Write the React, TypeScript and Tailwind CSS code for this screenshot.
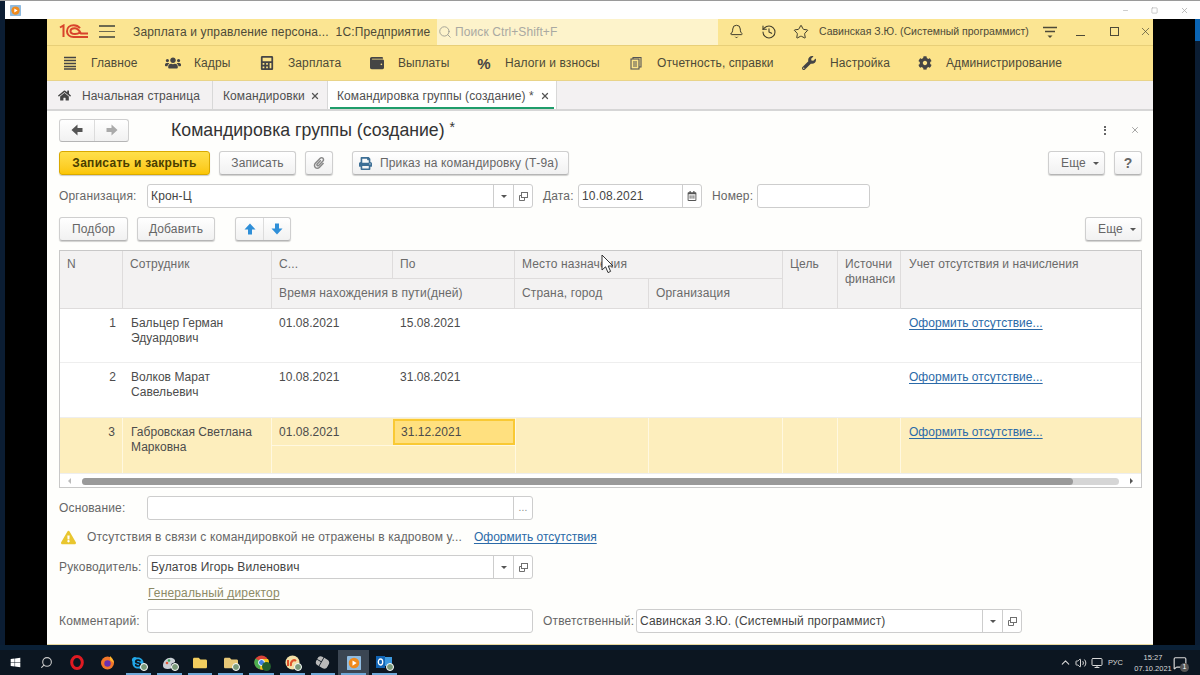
import React from "react";
import { FaHome, FaUsers, FaCalculator, FaWallet, FaWrench, FaCog, FaPrint, FaPaperclip, FaRegCalendarAlt, FaExclamationTriangle, FaWindows, FaSkype, FaFolder, FaMouse } from "react-icons/fa";
import { Bell, History, Star, Search, Minus, Square, X, ChevronUp, Volume2, Monitor, MessageSquare } from "lucide-react";

const COLS = "grid grid-cols-[63px_149px_121px_122px_134px_134px_55px_63px_1fr]";

function Btn({ className = "", children }: { className?: string; children: React.ReactNode }) {
  return (
    <div className={"flex h-[24px] items-center justify-center rounded-[3px] border border-[#cfcfcf] border-b-[#b5b5b5] bg-linear-to-b from-white to-[#f1f1f1] text-[12px] text-[#666] tracking-[0.15px] shadow-[0_1px_1px_rgba(0,0,0,0.18)] " + className}>
      {children}
    </div>
  );
}

function Arrow({ dir, color }: { dir: "up" | "down" | "left" | "right"; color: string }) {
  const r = { up: "rotate-0", down: "rotate-180", left: "-rotate-90", right: "rotate-90" }[dir];
  return (
    <svg className={r} width="12" height="12" viewBox="0 0 12 12" fill={color}>
      <path d="M6 0.5 L11.5 6.5 H8 V11.5 H4 V6.5 H0.5 Z" />
    </svg>
  );
}

function Open() {
  return (
    <svg width="11" height="11" viewBox="0 0 11 11" fill="none" stroke="#6f6f6f" strokeWidth="1">
      <rect x="3.5" y="1.5" width="6" height="5" />
      <path d="M3.5 4.5h-2v5h5v-3" />
    </svg>
  );
}

function Caret() {
  return <span className="h-0 w-0 border-x-[3px] border-t-[3px] border-x-transparent border-t-[#555]" />;
}

function Field({ className = "", value, select, open, dots, cal }: { className?: string; value?: string; select?: boolean; open?: boolean; dots?: boolean; cal?: boolean }) {
  return (
    <div className={"flex h-[24px] items-stretch rounded-[3px] border border-[#cdcdcd] bg-white text-[12px] text-[#444] tracking-[0.15px] " + className}>
      <div className="flex flex-1 items-center pl-[3px] whitespace-nowrap">{value}</div>
      {select && <div className="flex w-[20px] items-center justify-center border-l border-[#cdcdcd]"><Caret /></div>}
      {open && <div className="flex w-[19px] items-center justify-center border-l border-[#cdcdcd]"><Open /></div>}
      {dots && <div className="flex w-[19px] items-center justify-center border-l border-[#cdcdcd] pb-[1px] text-[10px] text-[#888]">...</div>}
      {cal && <div className="flex w-[19px] items-center justify-center border-l border-[#cdcdcd]"><FaRegCalendarAlt className="text-[10px] text-[#555]" /></div>}
    </div>
  );
}

function Label({ className = "", children }: { className?: string; children: React.ReactNode }) {
  return <div className={"text-[12px] text-[#666] tracking-[0.15px] whitespace-nowrap " + className}>{children}</div>;
}

function Bars() {
  return (
    <svg width="14" height="14" viewBox="0 0 14 14" stroke="#444" strokeWidth="1.6"><path d="M1 1.5h12M1 4.5h12M1 7.5h12M1 10.5h12M1 13h12" /></svg>
  );
}

function Docs() {
  return (
    <svg width="13" height="14" viewBox="0 0 13 14" fill="none" stroke="#555" strokeWidth="1.1">
      <rect x="1" y="3" width="8" height="10" />
      <path d="M3 3V1.5h8V11H9M3 6h4M3 8h4M3 10h4" />
    </svg>
  );
}

const menu = [
  { w: "w-[103px]", icon: <Bars />, t: "Главное" },
  { w: "w-[94px]", icon: <FaUsers className="text-[16px]" />, t: "Кадры" },
  { w: "w-[110px]", icon: <FaCalculator className="text-[14px]" />, t: "Зарплата" },
  { w: "w-[107px]", icon: <FaWallet className="text-[14px]" />, t: "Выплаты" },
  { w: "w-[152px]", icon: <span className="text-[15px] font-bold leading-none">%</span>, t: "Налоги и взносы" },
  { w: "w-[173px]", icon: <Docs />, t: "Отчетность, справки" },
  { w: "w-[116px]", icon: <FaWrench className="text-[14px]" />, t: "Настройка" },
  { w: "w-[150px]", icon: <FaCog className="text-[14px]" />, t: "Администрирование" },
];

function Logo1C() {
  return (
    <svg width="30" height="15" viewBox="0 0 30 15" fill="none" stroke="#d8432b" strokeWidth="2">
      <path d="M1 3.5 L4.5 1.5 V13" />
      <path d="M21 4.2 C19.5 2.2 17 1.2 14.6 1.2 C10.6 1.2 8 3.8 8 7.2 C8 10.6 10.6 13 14.6 13 H29" />
      <path d="M20.5 8.6 C19.6 9.6 17.8 10 16 10 C13.4 10 11.5 9 11.5 7.2 C11.5 5.2 13.4 4.2 15.6 4.2 C17.8 4.2 20 5.6 22 9.6 H29" />
    </svg>
  );
}

function Cursor() {
  return (
    <svg className="absolute left-[601px] top-[254px]" width="15" height="21" viewBox="0 0 15 21">
      <path d="M1 1 V16 L4.6 12.8 L7 18.6 L9.6 17.4 L7.2 12 H12 Z" fill="#fff" stroke="#333" strokeWidth="1" />
    </svg>
  );
}

const rows = [
  { n: "1", a: "Бальцер Герман", b: "Эдуардович", s: "01.08.2021", e: "15.08.2021", h: "h-[54px]" },
  { n: "2", a: "Волков Марат", b: "Савельевич", s: "10.08.2021", e: "31.08.2021", h: "h-[55px]" },
];

function Link({ className = "", children }: { className?: string; children: React.ReactNode }) {
  return <span className={"text-[12px] text-[#2b6aa8] underline underline-offset-2 whitespace-nowrap " + className}>{children}</span>;
}

function Table() {
  const hc = "border-r border-b border-[#dedcdc] pl-[7px] text-[12px] text-[#6a6a6a] tracking-[0.15px]";
  return (
    <div className="mt-[9px] mr-[11px] ml-[12px] h-[238px] border border-[#c8c8c8] bg-white">
      <div className={COLS + " h-[58px] grid-rows-[28px_30px] border-b border-[#d8d8d8] bg-[#f3f2f2] leading-[15px]"}>
        <div className={hc + " row-span-2 pt-[6px]"}>N</div>
        <div className={hc + " row-span-2 pt-[6px]"}>Сотрудник</div>
        <div className={hc + " pt-[6px]"}>С...</div>
        <div className={hc + " pt-[6px]"}>По</div>
        <div className={hc + " col-span-2 pt-[6px]"}>Место назначения</div>
        <div className={hc + " row-span-2 pt-[6px]"}>Цель</div>
        <div className={hc + " row-span-2 overflow-hidden whitespace-nowrap pt-[6px]"}>Источни<br />финанси</div>
        <div className="row-span-2 pl-[8px] pt-[6px] text-[12px] text-[#6a6a6a] tracking-[0.05px] whitespace-nowrap">Учет отсутствия и начисления</div>
        <div className={hc + " col-span-2 pt-[7px]"}>Время нахождения в пути(дней)</div>
        <div className={hc + " pt-[7px]"}>Страна, город</div>
        <div className={hc + " pt-[7px]"}>Организация</div>
      </div>
      {rows.map((r) => (
        <div key={r.n} className={COLS + " border-b border-[#eeeeee] text-[12px] leading-[15px] text-[#4c4c4c] tracking-[0.03px] " + r.h}>
          <div className="pt-[7px] pr-[7px] text-right">{r.n}</div>
          <div className="pl-[8px] pt-[7px]">{r.a}<br />{r.b}</div>
          <div className="pl-[7px] pt-[7px]">{r.s}</div>
          <div className="pl-[7px] pt-[7px]">{r.e}</div>
          <div /><div /><div /><div />
          <div className="pl-[8px] pt-[7px]"><Link className="text-[11.7px]">Оформить отсутствие...</Link></div>
        </div>
      ))}
      <div className={COLS + " h-[55px] grid-rows-[27px_28px] bg-[#fdeebd] text-[12px] leading-[15px] text-[#4c4c4c] tracking-[0.03px]"}>
        <div className="row-span-2 border-r border-[#fff8e0] pt-[7px] pr-[7px] text-right">3</div>
        <div className="row-span-2 border-r border-[#fff8e0] pl-[8px] pt-[7px] whitespace-nowrap">Габровская Светлана<br />Марковна</div>
        <div className="pl-[7px] pt-[7px]">01.08.2021</div>
        <div className="mt-[1px] border-2 border-[#f9c934] bg-[#ffe07f] pl-[6px] pt-[4px]">31.12.2021</div>
        <div className="row-span-2 border-r border-l border-[#fff8e0]" />
        <div className="row-span-2 border-r border-[#fff8e0]" />
        <div className="row-span-2 border-r border-[#fff8e0]" />
        <div className="row-span-2 border-r border-[#fff8e0]" />
        <div className="row-span-2 pl-[8px] pt-[7px]"><Link className="text-[11.7px]">Оформить отсутствие...</Link></div>
        <div className="col-span-2 border-t border-[#fff8e0]" />
      </div>
      <div className="flex h-[15px] items-center border-t border-[#eeeeee] px-[8px]">
        <span className="h-0 w-0 border-y-[3px] border-r-[3px] border-y-transparent border-r-[#bbb]" />
        <div className="mx-[11px] h-[7px] flex-1 rounded-full bg-[#d6d6d6]">
          <div className="h-full w-[95.6%] rounded-full bg-[#9a9a9a]" />
        </div>
        <span className="h-0 w-0 border-y-[3px] border-l-[3px] border-y-transparent border-l-[#555]" />
      </div>
    </div>
  );
}

function TaskIcon({ children, active, run }: { children?: React.ReactNode; active?: boolean; run?: boolean }) {
  return (
    <div className={"relative flex h-full w-[30.75px] items-center justify-center " + (active ? "bg-[#3b4653]" : "")}>
      {children}
      {run && <span className="absolute right-[3px] bottom-0 left-[3px] h-[2px] bg-[#6fa8d8]" />}
    </div>
  );
}

function Badge() {
  return <span className="absolute left-[17px] top-[13px] h-[8px] w-[8px] rounded-full border border-white bg-[#7a9a7a]" />;
}

function Player({ size }: { size: number }) {
  return (
    <svg width={size} height={size} viewBox="0 0 16 16">
      <rect width="16" height="16" rx="1" fill="#8fbbe0" />
      <circle cx="8" cy="8" r="6" fill="#f08a1d" />
      <path d="M6.3 5 L11 8 L6.3 11 Z" fill="#fff" />
    </svg>
  );
}

export default function App() {
  return (
    <div className="relative flex h-[675px] w-[1200px] flex-col overflow-hidden bg-black font-['Liberation_Sans',Arial,sans-serif]">
      <div className="h-px bg-[#9a9a9a]" />
      <div className="flex h-[18px] bg-[#0b1d33]">
        <div className="ml-[5px] flex flex-1 items-center justify-between bg-white pr-[11px] pl-[5px]">
          <Player size={11} />
          <div className="flex items-center gap-[22px] text-[#a8a8a8]">
            <Minus size={7} />
            <Square size={7} />
            <X size={9} />
          </div>
        </div>
      </div>

      <div className="flex h-[626px]">
        <div className="w-[5px] bg-[#0b1d33]" />
        <div className="w-[42px] bg-black" />
        <div className="flex w-[1106px] flex-col border-b border-[#e8d9a0] bg-[#fefefc]">
          {/* top bar */}
          <div className="flex h-[27px] shrink-0 items-center border-b border-[#e8cf78] bg-[#fbe592] pb-[1px]">
            <div className="ml-[12px]"><Logo1C /></div>
            <div className="ml-[10px] flex w-[16px] flex-col gap-[4px]">
              <span className="h-[1.5px] bg-[#6d6a50]" />
              <span className="h-[1.5px] bg-[#6d6a50]" />
              <span className="h-[1.5px] bg-[#6d6a50]" />
            </div>
            <div className="ml-[18px] w-[304px] text-[12px] tracking-[0.15px] text-[#4d4a38] whitespace-nowrap">Зарплата и управление персона...&nbsp; 1С:Предприятие</div>
            <div className="flex h-[26px] w-[281px] items-center bg-[#fdf3cb] pl-[1px] text-[12px] tracking-[0.1px] text-[#a9a9a2]">
              <Search size={14} strokeWidth={1.5} className="mr-[3px] text-[#9a9a90]" />
              Поиск Ctrl+Shift+F
            </div>
            <Bell size={15} strokeWidth={1.6} className="ml-[11px] text-[#3f3c2c]" />
            <History size={16} strokeWidth={1.6} className="ml-[17px] text-[#3f3c2c]" />
            <Star size={16} strokeWidth={1.5} className="ml-[16px] text-[#3f3c2c]" />
            <div className="ml-[10px] w-[224px] text-[10.5px] text-[#4d4a38] whitespace-nowrap">Савинская З.Ю. (Системный программист)</div>
            <svg width="14" height="14" viewBox="0 0 14 14" stroke="#4d4a38" strokeWidth="1.4" fill="none"><path d="M0 2.5h14M2 6.5h10" /><path d="M4.5 10.5h5L7 13Z" fill="#4d4a38" stroke="none" /></svg>
            <div className="ml-[19px] mt-[8px] h-[1.5px] w-[9px] bg-[#4d4a38]" />
            <div className="ml-[25px] h-[9px] w-[9px] border-[1.5px] border-[#4d4a38]" />
            <X size={13} strokeWidth={1.3} className="ml-[20px] text-[#4d4a38]" />
          </div>
          {/* menu */}
          <div className="flex h-[35px] shrink-0 items-center border-b border-[#e9d489] bg-[#fce38a] pl-[15px] text-[12px] text-[#4d4a38] tracking-[0.1px]">
            {menu.map((m) => (
              <div key={m.t} className={"flex items-center gap-[13px] whitespace-nowrap " + m.w}>
                <span className="flex w-[16px] justify-center text-[#454545]">{m.icon}</span>
                {m.t}
              </div>
            ))}
          </div>
          {/* tabs */}
          <div className="flex h-[30px] shrink-0 border-b-2 border-[#d6d6d6] bg-[#f3f1f2] text-[12px] text-[#4f4f4f] tracking-[0.1px] whitespace-nowrap">
            <div className="flex w-[166px] items-center border-r border-[#d8d8d8] pt-[1px] pl-[11px]">
              <FaHome className="mr-[11px] text-[13px] text-[#444]" />Начальная страница
            </div>
            <div className="flex w-[115px] items-center justify-between border-r border-[#d8d8d8] pt-[1px] pr-[7px] pl-[10px]">
              Командировки <X size={10} strokeWidth={3} className="text-[#555]" />
            </div>
            <div className="relative flex w-[229px] items-center justify-between border-r border-[#d8d8d8] bg-white pt-[1px] pr-[6px] pl-[9px]">
              Командировка группы (создание) * <X size={10} strokeWidth={3} className="text-[#555]" />
              <span className="absolute right-[2px] bottom-0 left-[2px] h-[2px] bg-[#1f9d6b]" />
            </div>
          </div>
          {/* title */}
          <div className="flex h-[40px] shrink-0 items-center pr-[13px] pb-[2px] pl-[12px]">
            <div className="flex h-[23px] w-[70px] rounded-[3px] border border-[#cfcfcf] border-b-[#b5b5b5] bg-linear-to-b from-white to-[#f1f1f1]">
              <div className="flex w-[35px] items-center justify-center border-r border-[#dcdcdc]"><Arrow dir="left" color="#555" /></div>
              <div className="flex flex-1 items-center justify-center"><Arrow dir="right" color="#aaa" /></div>
            </div>
            <div className="ml-[42px] flex-1 text-[17.7px] text-[#333]">Командировка группы (создание) <span className="align-top text-[14px]">*</span></div>
            <div className="mr-[24px] flex flex-col gap-[1.5px]">
              <span className="h-[2px] w-[2px] bg-[#666]" /><span className="h-[2px] w-[2px] bg-[#666]" /><span className="h-[2px] w-[2px] bg-[#666]" />
            </div>
            <X size={10} strokeWidth={1.6} className="text-[#777]" />
          </div>
          {/* command bar */}
          <div className="flex shrink-0 items-center pr-[11px] pl-[12px]">
            <div className="flex h-[24px] w-[151px] items-center justify-center rounded-[3px] border border-[#d9a900] bg-linear-to-b from-[#ffe04a] to-[#fbc600] text-[12px] font-bold tracking-[0.3px] text-[#4a3d00] shadow-[0_1px_1px_rgba(0,0,0,0.2)]">Записать и закрыть</div>
            <Btn className="ml-[9px] w-[77px]">Записать</Btn>
            <Btn className="ml-[9px] w-[28px]"><FaPaperclip className="text-[12px] text-[#888]" /></Btn>
            <Btn className="ml-[19px] w-[217px] justify-start pl-[6px]"><FaPrint className="mr-[8px] text-[13px] text-[#3d6f96]" />Приказ на командировку (Т-9а)</Btn>
            <div className="flex-1" />
            <Btn className="w-[57px] justify-start gap-[7px] pl-[12px]">Еще <Caret /></Btn>
            <Btn className="ml-[9px] w-[28px] text-[14px] font-bold text-[#444]">?</Btn>
          </div>
          {/* org */}
          <div className="mt-[9px] flex shrink-0 items-center pl-[12px]">
            <Label className="w-[88px]">Организация:</Label>
            <Field className="w-[386px]" value="Крон-Ц" select open />
            <Label className="ml-[10px] w-[35px]">Дата:</Label>
            <Field className="w-[124px] border-[#b8b8b8]" value="10.08.2021" cal />
            <Label className="ml-[10px] w-[45px]">Номер:</Label>
            <Field className="w-[113px]" />
          </div>
          {/* table bar */}
          <div className="mt-[9px] flex shrink-0 items-center pr-[11px] pl-[12px]">
            <Btn className="w-[69px]">Подбор</Btn>
            <Btn className="ml-[9px] w-[78px]">Добавить</Btn>
            <div className="ml-[20px] flex h-[24px] w-[56px] rounded-[3px] border border-[#cfcfcf] border-b-[#b5b5b5] bg-linear-to-b from-white to-[#f1f1f1] shadow-[0_1px_1px_rgba(0,0,0,0.18)]">
              <div className="flex w-[28px] items-center justify-center border-r border-[#dcdcdc]"><Arrow dir="up" color="#2f8fd8" /></div>
              <div className="flex flex-1 items-center justify-center"><Arrow dir="down" color="#2f8fd8" /></div>
            </div>
            <div className="flex-1" />
            <Btn className="w-[57px] justify-start gap-[7px] pl-[12px]">Еще <Caret /></Btn>
          </div>
          <Table />
          {/* base */}
          <div className="mt-[8px] flex shrink-0 items-center pl-[12px]">
            <Label className="w-[88px]">Основание:</Label>
            <Field className="w-[386px]" dots />
          </div>
          <div className="mt-[8px] flex h-[18px] shrink-0 items-center pl-[14px]">
            <FaExclamationTriangle className="text-[15px] text-[#e9c62f]" />
            <Label className="ml-[11px] text-[#555]">Отсутствия в связи с командировкой не отражены в кадровом у...</Label>
            <Link className="ml-[12px]">Оформить отсутствия</Link>
          </div>
          <div className="mt-[9px] flex shrink-0 items-center pl-[12px]">
            <Label className="w-[88px]">Руководитель:</Label>
            <Field className="w-[386px]" value="Булатов Игорь Виленович" select open />
          </div>
          <div className="mt-[6px] h-[16px] shrink-0 pl-[101px] text-[12px] leading-[16px] tracking-[0.15px] text-[#8d8a66] underline underline-offset-2">Генеральный директор</div>
          <div className="mt-[8px] flex shrink-0 items-center pl-[12px]">
            <Label className="w-[88px]">Комментарий:</Label>
            <Field className="w-[386px]" />
            <Label className="ml-[10px] w-[93px]">Ответственный:</Label>
            <Field className="w-[386px]" value="Савинская З.Ю. (Системный программист)" select open />
          </div>
        </div>
        <div className="w-[42px] bg-black" />
        <div className="flex w-[5px] flex-col bg-[#0b1d33]"><div className="h-[22px] bg-[#0a64b4]" /></div>
      </div>

      <div className="h-[5px] bg-[#0a2036]" />
      <div className="flex h-[25px] items-center bg-[#0c1621] text-[#d8d8d8]">
        <TaskIcon><FaWindows className="text-[11px] text-white" /></TaskIcon>
        <TaskIcon><Search size={13} className="-scale-x-100 text-[#ccc]" /></TaskIcon>
        <TaskIcon>
          <svg width="14" height="15" viewBox="0 0 14 15"><ellipse cx="7" cy="7.5" rx="5.3" ry="6" fill="none" stroke="#e01a22" strokeWidth="3" /></svg>
        </TaskIcon>
        <TaskIcon>
          <svg width="15" height="15" viewBox="0 0 15 15"><circle cx="7.5" cy="8" r="6.5" fill="#f2762a" /><circle cx="7.5" cy="8.5" r="3.2" fill="#6a2fb0" /><path d="M10 1 C12 3 13.5 5 14 8 L10 5Z" fill="#ffb52e" /></svg>
        </TaskIcon>
        <TaskIcon run><FaSkype className="text-[14px] text-[#22a7e8]" /><Badge /></TaskIcon>
        <TaskIcon run>
          <svg width="15" height="14" viewBox="0 0 15 14"><path d="M1 10 C1 4 6 1 10 2 C14 3 14 7 11 7 C9 7 9 10 10 12 C6 14 1 13 1 10Z" fill="#c9ced4" /><circle cx="5" cy="7" r="1.3" fill="#e25b3a" /><circle cx="7" cy="4.5" r="1.3" fill="#3aa55b" /></svg>
          <Badge />
        </TaskIcon>
        <TaskIcon run><FaFolder className="text-[14px] text-[#f2cd5e]" /></TaskIcon>
        <TaskIcon run><FaFolder className="text-[14px] text-[#e7c777]" /><Badge /></TaskIcon>
        <TaskIcon run>
          <svg width="15" height="15" viewBox="0 0 15 15"><circle cx="7.5" cy="7.5" r="7" fill="#db4437" /><path d="M1.5 3.5 A7 7 0 0 0 6 14.3 L9 8Z" fill="#4caf50" /><path d="M7.5 4 H14 A7 7 0 0 1 6 14.3Z" fill="#f5c518" /><circle cx="7.5" cy="7.5" r="3" fill="#3f7fe0" stroke="#fff" /></svg>
          <span className="absolute left-[16px] top-[12px] h-[9px] w-[9px] rounded-full bg-[#245f2e]" />
        </TaskIcon>
        <TaskIcon run>
          <svg width="15" height="15" viewBox="0 0 15 15"><circle cx="7.5" cy="7.5" r="7" fill="#f3dfa6" /><path d="M3 11 V5 M6 11 C5 6 9 4 11 6" stroke="#e0532b" strokeWidth="2" fill="none" /></svg>
          <Badge />
        </TaskIcon>
        <TaskIcon run><FaMouse className="-rotate-60 text-[13px] text-[#b9b9b9]" /></TaskIcon>
        <TaskIcon active run><Player size={14} /></TaskIcon>
        <TaskIcon run>
          <svg width="16" height="15" viewBox="0 0 16 15"><rect x="5" y="2" width="11" height="9" fill="#3d9ae0" /><rect x="0" y="1" width="9" height="12" fill="#1164b4" /><ellipse cx="4.5" cy="7" rx="2.2" ry="3" fill="none" stroke="#fff" strokeWidth="1.3" /></svg>
          <Badge />
        </TaskIcon>
        <div className="flex-1" />
        <ChevronUp size={13} className="mr-[2.5px] text-[#d8d8d8]" />
        <Volume2 size={12} className="mr-[4px]" />
        <Monitor size={12} className="mr-[5px]" />
        <span className="mr-[11px] text-[7.5px]">РУС</span>
        <div className="mr-[1px] flex w-[38px] flex-col items-center text-[7.5px] leading-[11px]">
          <span>15:27</span>
          <span className="whitespace-nowrap">07.10.2021</span>
        </div>
        <div className="relative mr-[13px]">
          <MessageSquare size={14} />
          <span className="absolute left-[7px] top-[7px] flex h-[9px] w-[9px] items-center justify-center rounded-full bg-[#555] text-[7px] text-white">1</span>
        </div>
      </div>
      <Cursor />
    </div>
  );
}
